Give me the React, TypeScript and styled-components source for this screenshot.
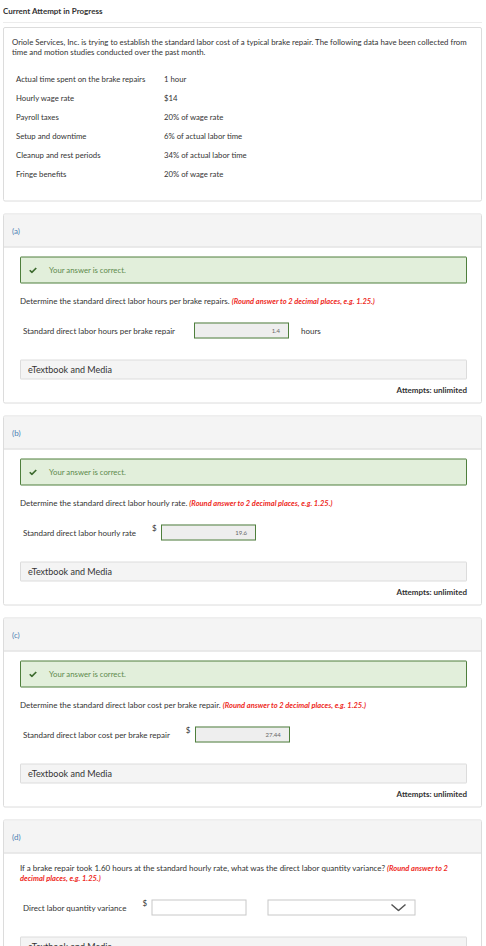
import React from "react";
import styled, { createGlobalStyle } from "styled-components";

// The reference is a half-size capture of the quiz page, so everything is laid
// out at full size and scaled down once at the top.
const GlobalStyle = createGlobalStyle`
  html, body {
    margin: 0;
    padding: 0;
    background: #fff;
  }
  body {
    font-family: Lato, "Open Sans", Arial, sans-serif;
    color: #333;
  }
`;

const Scale = styled.div`
  width: 972px;
  transform: scale(0.5);
  transform-origin: 0 0;
`;

const Page = styled.div`
  padding: 0 8px 0 6px;
`;

const AttemptTitle = styled.div`
  font-size: 16px;
  font-weight: 700;
  line-height: 44px;
  border-bottom: 2px solid #ececec;
`;

const ProblemBox = styled.div`
  margin-top: 8px;
  border: 2px solid #dcdcdc;
  border-radius: 4px;
  padding: 17px 16px 35px 16px;
`;

const Paragraph = styled.p`
  margin: 0;
  font-size: 15.6px;
  line-height: 20px;
`;

const DataTable = styled.div`
  margin-top: 25px;
  padding-left: 8px;
  display: grid;
  grid-template-columns: 296px auto;
  grid-auto-rows: 38px;
  align-items: center;
  font-size: 15.5px;
`;

const Section = styled.section`
  margin-top: 24px;
  border: 2px solid #dcdcdc;
  border-radius: 4px;
`;

const SectionHeader = styled.div`
  height: 64px;
  background: #f4f4f4;
  border-bottom: 2px solid #dcdcdc;
  display: flex;
  align-items: center;
  padding-left: 16px;
  font-size: 16px;
  color: #4a7fb3;
`;

const SectionBody = styled.div`
  padding: 18px 28px 16px 32px;
`;

const Correct = styled.div`
  height: 50px;
  background: #e2efdb;
  border: 2px solid #4e7f3c;
  border-radius: 2px;
  display: flex;
  align-items: center;
  padding-left: 16px;
  gap: 24px;
  font-size: 15.5px;
  color: #5c8a4c;
`;

const Question = styled.p<{ $first?: boolean }>`
  margin: ${(p) => (p.$first ? 0 : 24)}px 0 0 0;
  font-size: 16px;
  line-height: 20px;
  max-width: 870px;
`;

const Hint = styled.span`
  color: #ee2a24;
  font-style: italic;
  font-weight: 700;
  font-size: 15px;
`;

const AnswerRow = styled.div`
  margin-top: 34px;
  padding-left: 6px;
  display: flex;
  align-items: center;
  font-size: 16px;
`;

const AnswerLabel = styled.span<{ $gap: number }>`
  margin-right: ${(p) => p.$gap}px;
`;

const Currency = styled.span`
  width: 18px;
  align-self: flex-start;
  margin-top: -3px;
`;

const AnswerInput = styled.div<{ $filled: boolean }>`
  box-sizing: border-box;
  width: 190px;
  height: 32px;
  background: ${(p) => (p.$filled ? "#eeeeee" : "#fff")};
  border: 2px solid ${(p) => (p.$filled ? "#4e7f3c" : "#c8c8c8")};
  display: flex;
  align-items: center;
  justify-content: flex-end;
  padding-right: 16px;
  font-size: 12px;
  color: #666;
`;

const Unit = styled.span`
  margin-left: 24px;
`;

const Select = styled.div`
  box-sizing: border-box;
  margin-left: 42px;
  width: 296px;
  height: 32px;
  border: 2px solid #c8c8c8;
  display: flex;
  align-items: center;
  justify-content: flex-end;
  padding-right: 16px;
`;

const Media = styled.div`
  margin-top: 42px;
  height: 36px;
  background: #f4f4f4;
  border: 2px solid #dcdcdc;
  border-radius: 2px;
  display: flex;
  align-items: center;
  padding-left: 14px;
  font-size: 18px;
`;

const Attempts = styled.div`
  margin-top: 12px;
  line-height: 18px;
  text-align: right;
  font-size: 16px;
  font-weight: 700;
`;

const Check = () => (
  <svg width="16" height="13" viewBox="0 0 16 13">
    <path d="M1.5 6.5 L5.8 10.8 L14.5 2" fill="none" stroke="#3d6b2f" strokeWidth="3.4" />
  </svg>
);

const Chevron = () => (
  <svg width="32" height="16" viewBox="0 0 32 16">
    <path d="M2 2 L16 14 L30 2" fill="none" stroke="#555" strokeWidth="3" />
  </svg>
);

const data: [string, string][] = [
  ["Actual time spent on the brake repairs", "1 hour"],
  ["Hourly wage rate", "$14"],
  ["Payroll taxes", "20% of wage rate"],
  ["Setup and downtime", "6% of actual labor time"],
  ["Cleanup and rest periods", "34% of actual labor time"],
  ["Fringe benefits", "20% of wage rate"],
];

const HINT = "(Round answer to 2 decimal places, e.g. 1.25.)";

interface PartProps {
  letter: string;
  question: string;
  label: string;
  value: string;
  currency?: boolean;
  unit?: string;
}

const Part = ({ letter, question, label, value, currency, unit }: PartProps) => (
  <Section>
    <SectionHeader>({letter})</SectionHeader>
    <SectionBody>
      <Correct>
        <Check />
        Your answer is correct.
      </Correct>
      <Question>
        {question} <Hint>{HINT}</Hint>
      </Question>
      <AnswerRow>
        <AnswerLabel $gap={currency ? 32 : 38}>{label}</AnswerLabel>
        {currency && <Currency>$</Currency>}
        <AnswerInput $filled>{value}</AnswerInput>
        {unit && <Unit>{unit}</Unit>}
      </AnswerRow>
      <Media>eTextbook and Media</Media>
      <Attempts>Attempts: unlimited</Attempts>
    </SectionBody>
  </Section>
);

const App = () => (
  <Scale>
    <GlobalStyle />
    <Page>
      <AttemptTitle>Current Attempt in Progress</AttemptTitle>
      <ProblemBox>
        <Paragraph>
          Oriole Services, Inc. is trying to establish the standard labor cost of a typical brake repair. The
          following data have been collected from time and motion studies conducted over the past month.
        </Paragraph>
        <DataTable>
          {data.map(([k, v]) => (
            <React.Fragment key={k}>
              <span>{k}</span>
              <span>{v}</span>
            </React.Fragment>
          ))}
        </DataTable>
      </ProblemBox>

      <Part
        letter="a"
        question="Determine the standard direct labor hours per brake repairs."
        label="Standard direct labor hours per brake repair"
        value="1.4"
        unit="hours"
      />
      <Part
        letter="b"
        question="Determine the standard direct labor hourly rate."
        label="Standard direct labor hourly rate"
        value="19.6"
        currency
      />
      <Part
        letter="c"
        question="Determine the standard direct labor cost per brake repair."
        label="Standard direct labor cost per brake repair"
        value="27.44"
        currency
      />

      <Section>
        <SectionHeader>(d)</SectionHeader>
        <SectionBody>
          <Question $first>
            If a brake repair took 1.60 hours at the standard hourly rate, what was the direct labor quantity
            variance? <Hint>{HINT}</Hint>
          </Question>
          <AnswerRow>
            <AnswerLabel $gap={32}>Direct labor quantity variance</AnswerLabel>
            <Currency>$</Currency>
            <AnswerInput $filled={false} />
            <Select>
              <Chevron />
            </Select>
          </AnswerRow>
          <Media>eTextbook and Media</Media>
          <Attempts>Attempts: unlimited</Attempts>
        </SectionBody>
      </Section>
    </Page>
  </Scale>
);

export default App;
